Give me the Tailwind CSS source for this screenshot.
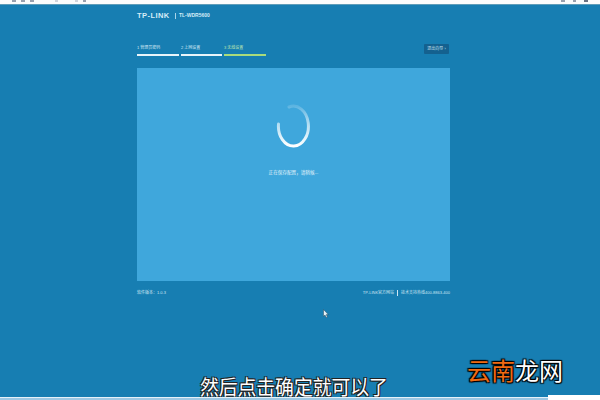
<!DOCTYPE html>
<html lang="zh">
  <head>
    <meta charset="UTF-8" />
    <title>TL-WDR5600</title>
    <script src="https://cdn.jsdelivr.net/npm/@tailwindcss/browser@4"></script>
  </head>
  <body class="bg-[#177eb2] overflow-hidden">
    <div class="relative w-[600px] h-[400px] flex flex-col font-['Liberation_Sans','Noto_Sans_CJK_SC',sans-serif]">
      <!-- browser bar -->
      <div class="h-[5px] bg-[#fbfcfc] border-b border-[#5f9db9] flex justify-between px-3 shrink-0">
        <div class="flex gap-[5px] h-[2px]">
          <span class="w-[4px] bg-gray-400"></span>
          <span class="w-[4px] bg-gray-400"></span>
          <span class="w-[4px] bg-gray-400"></span>
          <span class="w-[3px] ml-4 bg-gray-300"></span>
          <span class="w-[3px] ml-3 bg-gray-300"></span>
          <span class="w-[3px] bg-gray-400"></span>
        </div>
        <div class="flex gap-[8px] h-[2px]">
          <span class="w-[4px] bg-gray-400"></span>
          <span class="w-[3px] bg-gray-400"></span>
          <span class="w-[4px] bg-gray-500"></span>
        </div>
      </div>

      <div class="w-[313px] ml-[137px] flex flex-col">
        <!-- logo -->
        <div class="h-[21px] flex items-center text-[#d5ecf7]">
          <span class="w-[35px] text-[7.5px] leading-none font-bold tracking-[0.45px] whitespace-nowrap">TP-LINK</span>
          <span class="ml-[3px] mr-[3px] w-px h-[6px] bg-[#a9d4e9]"></span>
          <span class="text-[5px] leading-none font-bold">TL-WDR5600</span>
        </div>

        <!-- steps -->
        <div class="mt-[17px] h-[25px] flex justify-between items-start">
          <div class="flex gap-[2px] pt-[2px]">
            <div class="w-[42px] flex flex-col gap-[3px]">
              <span class="text-[4px] leading-[6px] text-[#d2e9f5] whitespace-nowrap">1 管理员密码</span>
              <span class="h-[2px] bg-[#e8f4fa]"></span>
            </div>
            <div class="w-[41px] flex flex-col gap-[3px]">
              <span class="text-[4px] leading-[6px] text-[#d2e9f5] whitespace-nowrap">2 上网设置</span>
              <span class="h-[2px] bg-[#e8f4fa]"></span>
            </div>
            <div class="w-[42px] flex flex-col gap-[3px]">
              <span class="text-[4px] leading-[6px] text-[#bfe8b0] whitespace-nowrap">3 无线设置</span>
              <span class="h-[2px] bg-[#a9dc7c]"></span>
            </div>
          </div>
          <div class="h-[10px] w-[25px] mt-px mr-px rounded-[1px] bg-[#14618f] flex items-center justify-center text-[4px] leading-none text-[#cbe5f3] whitespace-nowrap">退出向导 ›</div>
        </div>

        <!-- panel -->
        <div class="h-[213px] bg-[#3fa7dc] flex flex-col items-center">
          <svg class="mt-[36px]" width="36" height="44" viewBox="0 0 36 44" fill="none">
            <defs>
              <linearGradient id="spin" gradientUnits="userSpaceOnUse" x1="0" y1="2" x2="0" y2="42">
                <stop offset="0" stop-color="#ffffff" stop-opacity="0.15" />
                <stop offset="0.55" stop-color="#d8effa" stop-opacity="0.85" />
                <stop offset="1" stop-color="#ffffff" />
              </linearGradient>
            </defs>
            <path d="M13 3 A15 20 0 1 1 2.5 20" stroke="url(#spin)" stroke-width="3" stroke-linecap="round" />
          </svg>
          <p class="mt-[21px] text-[4.6px] leading-[8px] text-[#e4f3fb]">正在保存配置，请稍候...</p>
        </div>

        <!-- footer -->
        <div class="mt-[8px] h-[7px] flex justify-between items-center text-[4px] leading-none text-[#cfe7f3]">
          <span>软件版本：1.0.3</span>
          <div class="flex items-center gap-[3px]">
            <span>TP-LINK官方网站</span>
            <span class="w-px h-[6px] bg-[#cfe7f3]"></span>
            <span>技术支持热线400-8863-400</span>
          </div>
        </div>
      </div>

      <!-- cursor -->
      <svg class="absolute left-[323px] top-[309px]" width="6" height="9" viewBox="0 0 6 9">
        <path d="M0.5 0.5 V7.5 L2 6 L3.2 8.5 L4.4 8 L3.3 5.6 H5.3 Z" fill="#e8f2f7" stroke="#2a4a5c" stroke-width="0.5" />
      </svg>

      <!-- watermark -->
      <div class="absolute left-[467px] top-[358px] text-[24px] leading-[28px] whitespace-nowrap [text-shadow:1px_1px_1px_#000,-1px_-1px_1px_#000,1px_-1px_1px_#000,-1px_1px_1px_#000]">
        <span class="text-[#ef6a12]">云南</span><span class="text-white">龙网</span>
      </div>

      <!-- subtitle -->
      <div class="absolute left-[200px] top-[375px] text-[18.8px] leading-[26px] scale-y-110 text-white whitespace-nowrap [text-shadow:1px_1px_0_#222,-1px_-1px_0_#222,1px_-1px_0_#222,-1px_1px_0_#222]">然后点击确定就可以了</div>

      <!-- taskbar -->
      <div class="absolute left-0 right-0 bottom-0 h-[3px] bg-[#9cc8e4] border-t border-[#e6f2f9]">
        <div class="absolute right-0 bottom-0 w-[52px] h-[5px] bg-white"></div>
      </div>
    </div>
  </body>
</html>
